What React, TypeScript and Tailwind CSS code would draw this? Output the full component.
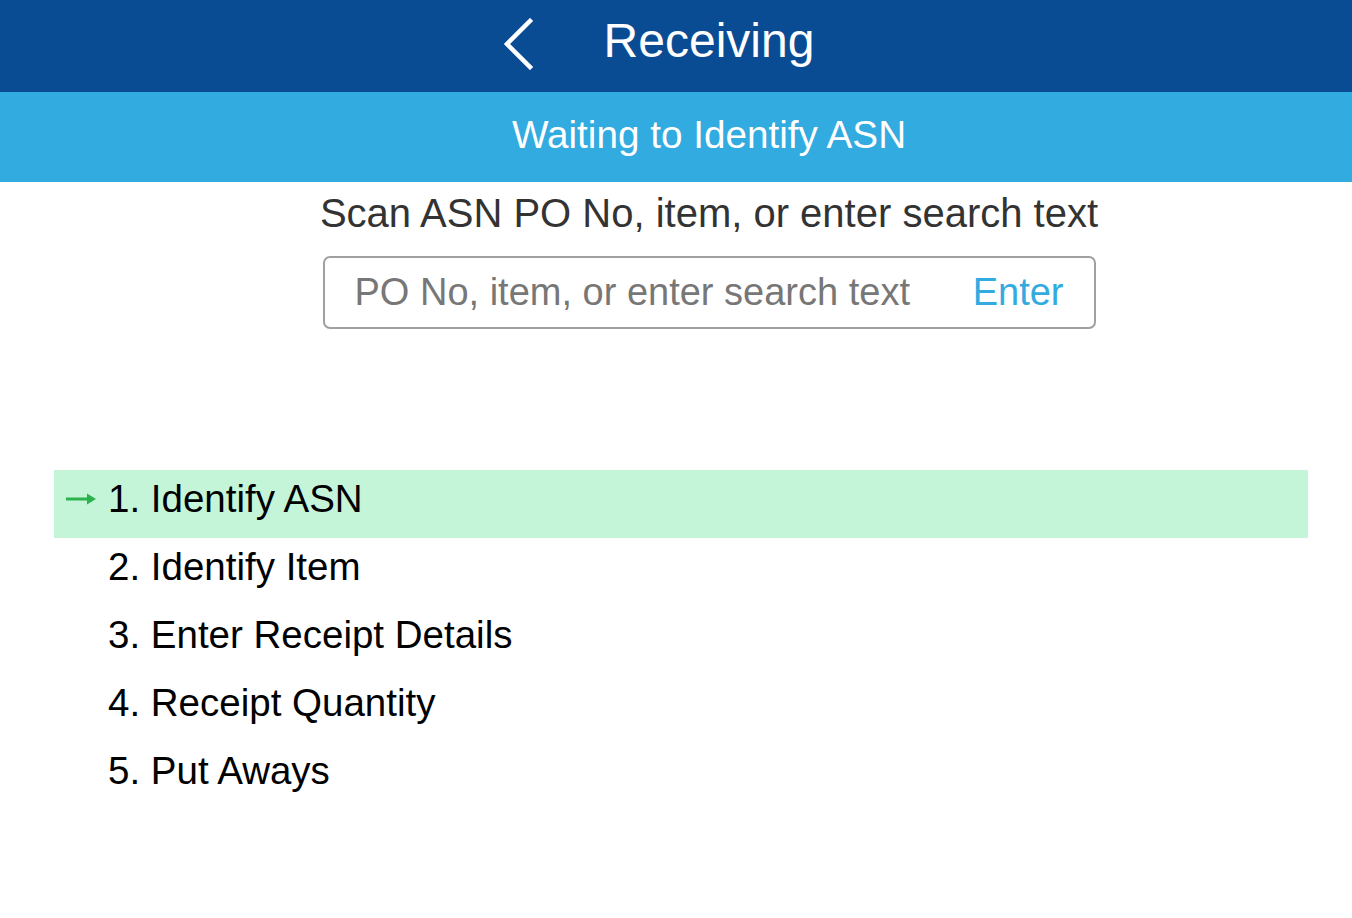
import { useState } from 'react'

const steps = [
  '1. Identify ASN',
  '2. Identify Item',
  '3. Enter Receipt Details',
  '4. Receipt Quantity',
  '5. Put Aways',
]

export default function App() {
  const [query, setQuery] = useState('')
  const current = 0

  return (
    <div className="min-h-[918px] w-full bg-white font-['Liberation_Sans',Arial,sans-serif]">
      {/* Title bar */}
      <header className="relative flex h-[92px] items-center justify-center bg-[#0a4c94] text-white">
        <button className="absolute left-[492px] top-[14px] flex h-[60px] w-[50px] items-center justify-center">
          <svg width="34" height="52" viewBox="0 0 34 52" fill="none">
            <path d="M30 3 L7 26 L30 49" stroke="white" strokeWidth="4.5" strokeLinecap="square" />
          </svg>
        </button>
        <h1 className="mb-[10px] ml-[66px] text-[48px] leading-none">Receiving</h1>
      </header>

      {/* Status bar */}
      <div className="flex h-[90px] items-center justify-center bg-[#32abe0] pb-[4px] pl-[66px] text-[38.7px] text-white">
        Waiting to Identify ASN
      </div>

      {/* Scan prompt */}
      <div className="flex flex-col items-center pl-[66px]">
        <p className="mt-[10px] text-[40px] leading-[42px] text-[#333]">
          Scan ASN PO No, item, or enter search text
        </p>
        <div className="mt-[22px] flex h-[73px] w-[773px] items-center justify-between rounded-[7px] border-2 border-[#a0a0a0] px-[30px]">
          <input
            value={query}
            onChange={(e) => setQuery(e.target.value)}
            className="w-[590px] bg-transparent text-[38px] text-[#333] outline-none placeholder:text-[#777]"
            placeholder="PO No, item, or enter search text"
          />
          <button className="text-[38px] text-[#32abe0]">Enter</button>
        </div>
      </div>

      {/* Steps */}
      <ul className="ml-[54px] mr-[44px] mt-[141px]">
        {steps.map((step, i) => (
          <li
            key={step}
            className={`flex h-[68px] items-center pb-[10px] text-[38.5px] text-black ${i === current ? 'bg-[#c5f5d9]' : ''}`}
          >
            <span className="flex w-[54px] justify-center">
              {i === current && (
                <svg width="32" height="14" viewBox="0 0 32 14" fill="none">
                  <path d="M1 7 H27" stroke="#2bb24c" strokeWidth="3" />
                  <path d="M22 1.5 L31 7 L22 12.5 Z" fill="#2bb24c" />
                </svg>
              )}
            </span>
            {step}
          </li>
        ))}
      </ul>
    </div>
  )
}
